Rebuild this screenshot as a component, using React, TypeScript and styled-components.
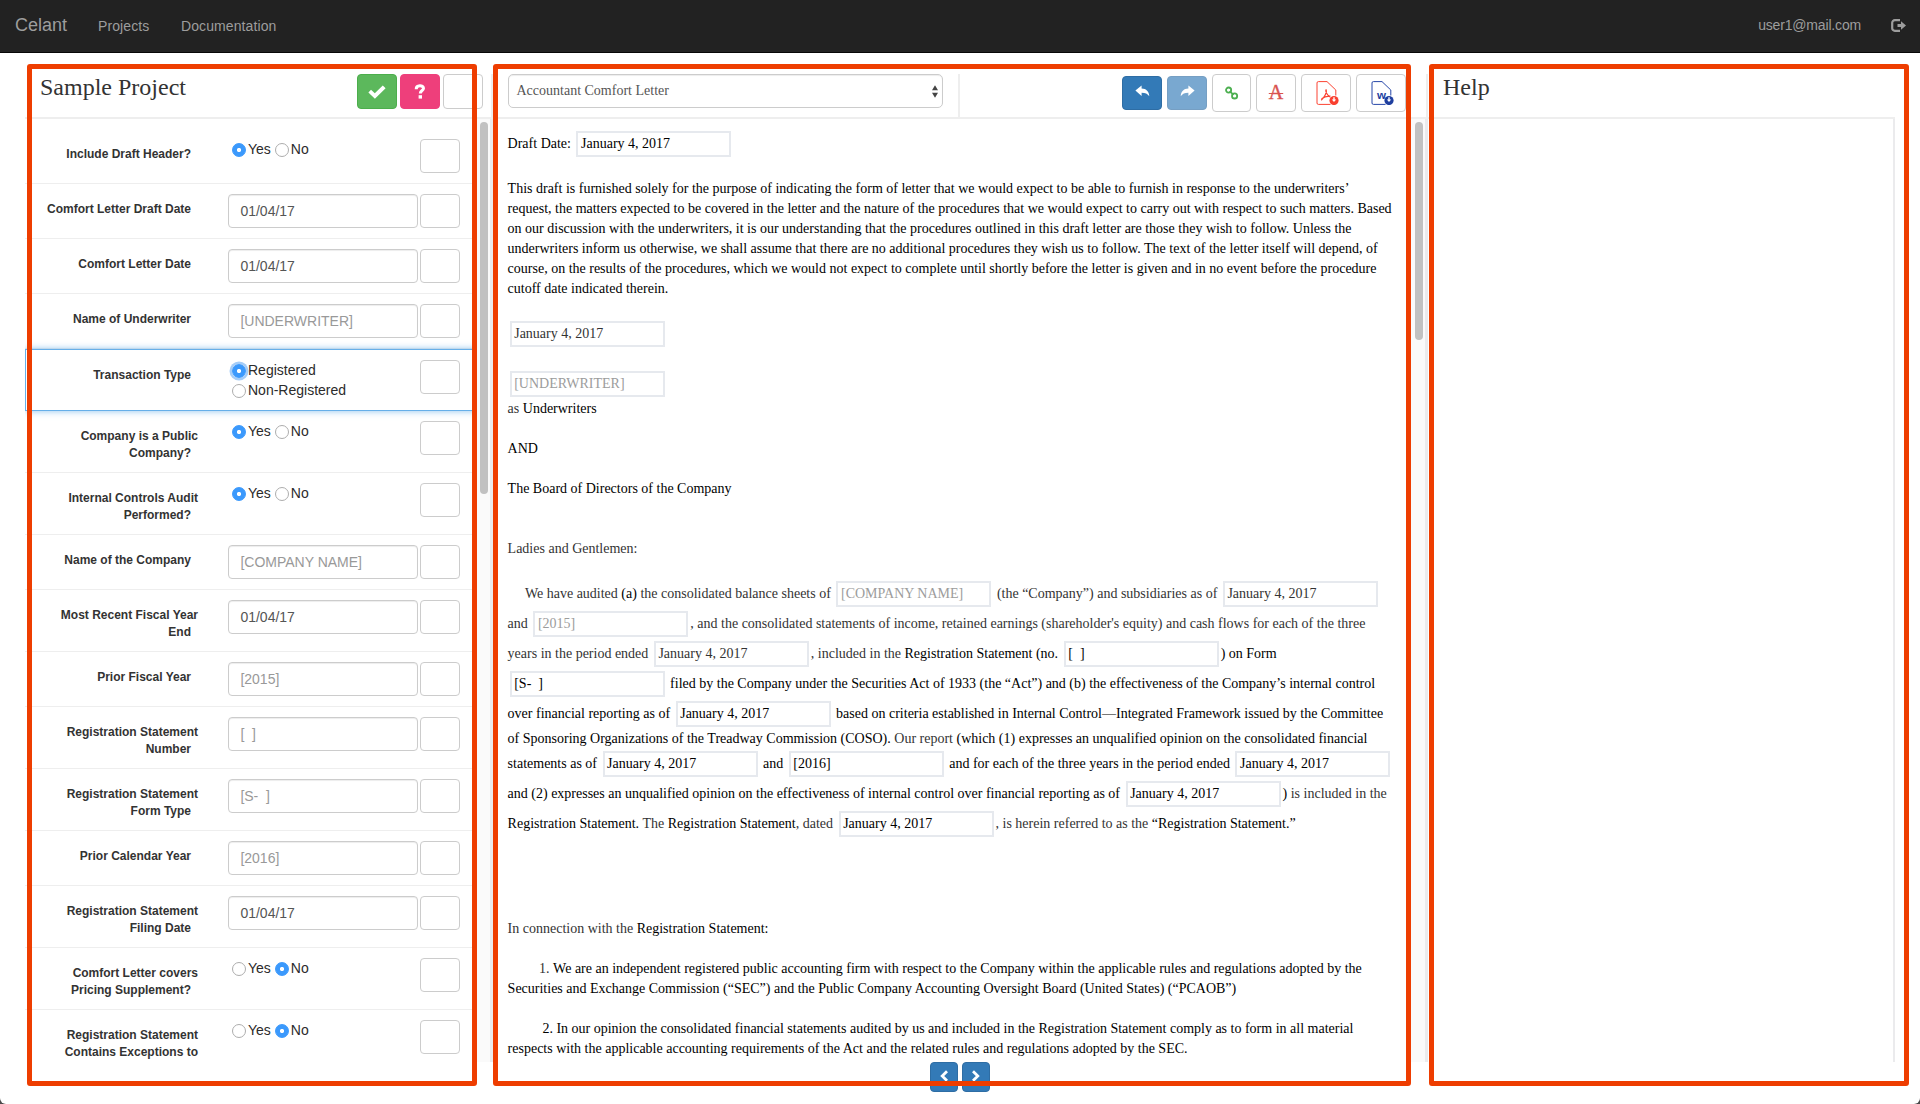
import React from "react";
import styled, { createGlobalStyle, css } from "styled-components";

const serif = `"Liberation Serif", "Times New Roman", serif`;
const sans = `"Liberation Sans", Arial, sans-serif`;

const GlobalStyle = createGlobalStyle`
  *, *::before, *::after { box-sizing: border-box; }
  html, body { margin: 0; padding: 0; background: #4a4a4a; }
  body { overflow: hidden; font-family: ${sans}; font-size: 14px; line-height: 20px; }
`;

const Page = styled.div`
  height: 1104px;
  display: flex;
  flex-direction: column;
  background: #fff;
  border-radius: 0 0 6px 6px;
`;

const Navbar = styled.nav`
  height: 53px;
  flex: none;
  display: flex;
  align-items: center;
  padding: 0 14px 2px 15px;
  background: #222;
  border-bottom: 1px solid #080808;
  color: #9d9d9d;
`;

const Brand = styled.span`
  font-size: 18px;
  width: 83px;
`;

const NavLink = styled.span<{ $width?: number }>`
  width: ${(p) => (p.$width ? `${p.$width}px` : "auto")};
  padding-top: 2px;
  letter-spacing: 0.1px;
`;

const User = styled.span`
  margin-left: auto;
  margin-right: 30px;
  letter-spacing: -0.17px;
`;

const Panels = styled.main`
  height: 1009px;
  margin: 21px 25px 0 25px;
  display: grid;
  grid-template-columns: 468px 935px 467px;
  padding-bottom: 21px;
`;

const Panel = styled.section`
  position: relative;
  height: 988px;
  display: flex;
  flex-direction: column;
  min-width: 0;
`;

/* Highlight frame drawn over each panel. */
const Frame = styled.div<{ $left: number; $width: number }>`
  position: absolute;
  z-index: 5;
  top: -10px;
  left: ${(p) => p.$left}px;
  width: ${(p) => p.$width}px;
  height: 1022px;
  border: 5px solid #ee3d00;
  border-radius: 3px;
  pointer-events: none;
`;

const PanelHeader = styled.header<{ $divided?: boolean }>`
  height: 45px;
  flex: none;
  display: flex;
  align-items: flex-start;
  border-bottom: 2px solid #eee;
  ${(p) =>
    p.$divided &&
    css`
      box-shadow: inset -2px 0 0 #eee;
    `}
`;

const Title = styled.h3`
  margin: 0;
  font: 400 24px/26px ${serif};
  color: #333;
  padding-left: 15px;
`;

const PanelBody = styled.div<{ $edge: number }>`
  flex: 1;
  min-height: 0;
  display: flex;
  overflow: hidden;
  border-right: ${(p) => p.$edge}px solid #ebebed;
`;

const Track = styled.div`
  width: 15px;
  flex: none;
  background: #fafafa;
  padding: 3px 0 0 5px;
`;

const Thumb = styled.div<{ $height: number }>`
  width: 8px;
  height: ${(p) => p.$height}px;
  border-radius: 4px;
  background: #c1c1c1;
`;

const HeaderButtons = styled.div`
  display: flex;
  gap: 3px;
  margin-left: auto;
  margin-right: 10px;
`;

type Tone = "green" | "pink" | "blank";
const tones: Record<Tone, [string, string]> = {
  green: ["#5cb85c", "#4cae4c"],
  pink: ["#ee3f7b", "#ee3f7b"],
  blank: ["transparent", "#ccc"],
};

const HeaderButton = styled.button<{ $tone: Tone }>`
  width: 40px;
  height: 35px;
  padding: 0;
  display: flex;
  align-items: center;
  justify-content: center;
  color: #fff;
  background: ${(p) => tones[p.$tone][0]};
  border: 1px solid ${(p) => tones[p.$tone][1]};
  border-radius: 4px;
`;

const Questions = styled.div`
  flex: 1;
  padding-top: 10px;
`;

const Row = styled.div<{ $active?: boolean }>`
  display: grid;
  grid-template-columns: 173px 30px 190px 2px 40px;
  align-items: start;
  padding: 10px 0;
  border-bottom: 1px solid #eee;
  ${(p) =>
    p.$active &&
    css`
      border: 1px solid #66afe9;
      margin-right: -4px;
      grid-template-columns: 172px 30px 190px 2px 40px;
      box-shadow: 0 0 7px rgba(102, 175, 233, 0.75);
    `}
`;

const Label = styled.label`
  grid-column: 1;
  padding-top: 7px;
  font: 700 12px/17px ${sans};
  letter-spacing: 0;
  text-align: right;
  white-space: pre;
  color: #333;
`;

/* Slot after the label where a required marker would sit. */
const MarkerSlot = styled.span`
  display: inline-block;
  width: 7px;
`;

const Field = styled.input`
  grid-column: 3;
  width: 190px;
  height: 34px;
  padding: 0 11.4px;
  font: 14px/20px ${sans};
  color: #555;
  background: #fff;
  border: 1px solid #ccc;
  border-radius: 4px;
  box-shadow: inset 0 1px 1px rgba(0, 0, 0, 0.075);
  &::placeholder {
    color: #999;
    opacity: 1;
  }
`;

const NoteBox = styled.div`
  grid-column: 5;
  height: 34px;
  border: 1px solid #ccc;
  border-radius: 4px;
`;

const Choices = styled.div`
  grid-column: 3;
  padding-left: 4px;
  display: flex;
  flex-wrap: wrap;
  column-gap: 4px;
`;

const Choice = styled.span`
  display: flex;
  align-items: center;
  gap: 2px;
  height: 20px;
  color: #2b2b2b;
`;

const Radio = styled.span<{ $on?: boolean; $focus?: boolean }>`
  width: 14px;
  height: 14px;
  margin-top: 2px;
  border-radius: 50%;
  border: 1px solid #adadad;
  background: #fff;
  ${(p) =>
    p.$on &&
    css`
      border-color: #3b99fc;
      background: radial-gradient(circle, #fff 0 1.8px, #3b99fc 2.4px);
    `}
  ${(p) =>
    p.$focus &&
    css`
      box-shadow: 0 0 0 2.5px #a5cdf8;
    `}
`;

const SelectSlot = styled.div`
  width: 467px;
  height: 43px;
  padding-left: 15px;
  border-right: 2px solid #eee;
`;

const Select = styled.div`
  width: 435px;
  height: 34px;
  display: flex;
  align-items: center;
  justify-content: space-between;
  padding: 0 4px 0 7.5px;
  font: 14px/20px ${serif};
  color: #555;
  border: 1px solid #ccc;
  border-radius: 5px;
  box-shadow: inset 0 1px 1px rgba(0, 0, 0, 0.075);
`;

const Tools = styled.div`
  display: flex;
  gap: 5px;
  margin-left: auto;
  margin-right: 22px;
`;

const ToolButton = styled.button<{ $width: number; $primary?: boolean; $faded?: boolean }>`
  width: ${(p) => p.$width}px;
  height: 38px;
  padding: 0;
  display: flex;
  align-items: center;
  justify-content: center;
  background: #fff;
  border: 1px solid #ccc;
  border-radius: 4px;
  ${(p) =>
    p.$primary &&
    css`
      height: 34px;
      margin-top: 2px;
      padding-bottom: 4px;
      background: #337ab7;
      border-color: #2e6da4;
    `}
  opacity: ${(p) => (p.$faded ? 0.65 : 1)};
`;

const StruckLetter = styled.span`
  font: 400 20px/20px ${serif};
  -webkit-text-stroke: 0.4px #d9534f;
  padding-bottom: 3px;
  color: #d9534f;
  text-decoration: line-through;
  text-decoration-thickness: 1px;
`;

const Document = styled.article`
  flex: 1;
  padding: 10px 0 0 14.6px;
  font: 14px/20px ${serif};
  color: #000;
`;

const Line = styled.div<{ $indent?: number; $before?: number; $dim?: boolean }>`
  display: flex;
  align-items: center;
  min-height: 20px;
  white-space: pre;
  padding-left: ${(p) => p.$indent ?? 0}px;
  margin-top: ${(p) => p.$before ?? 0}px;
  color: ${(p) => (p.$dim ? "#333" : "#000")};
`;

const Dark = styled.span`
  color: #000;
`;

const Dim = styled.span`
  color: #333;
`;

const Blank = styled.span<{ $empty?: boolean }>`
  width: 155px;
  height: 26px;
  margin: 2px;
  padding-left: 2.6px;
  line-height: 21px;
  border: 2px solid #e6e9ee;
  color: ${(p) => (p.$empty ? "#9c9c9c" : "inherit")};
`;

const Pager = styled.div`
  height: 30px;
  flex: none;
  display: flex;
  gap: 4px;
  padding-left: 437px;
  margin-bottom: -30px;
`;

const PageButton = styled.button`
  width: 28px;
  height: 30px;
  padding: 0 0 3px;
  display: flex;
  align-items: center;
  justify-content: center;
  background: #337ab7;
  border: 1px solid #2e6da4;
  border-radius: 4px;
`;

const LogoutIcon = () => (
  <svg width="15" height="13" viewBox="0 0 15 13">
    <path d="M9 1.2H3.8A2.6 2.6 0 0 0 1.2 3.800V9.200A2.600 2.600 0 0 0 3.800 11.800H9" fill="none" stroke="#9d9d9d" strokeWidth="2.200" />
    <path d="M6.500 5H10V2.300L15 6.500L10 10.700V8H6.500Z" fill="#9d9d9d" />
  </svg>
);

const CheckIcon = () => (
  <svg width="18" height="14" viewBox="0 0 18 14">
    <path d="M0.400 7.400L3 4.800L6.800 8.300L14.800 0.500L17.600 3.200L6.900 13.800Z" fill="#fff" />
  </svg>
);

const QuestionIcon = () => (
  <svg width="12" height="15" viewBox="0 0 12 15">
    <path d="M2.200 5.200C2.200 0.600 9.500 0.900 9.500 4.300C9.500 6.700 6.300 6.400 6.300 9.600" fill="none" stroke="#fff" strokeWidth="3" />
    <rect x="4.600" y="11.200" width="3.400" height="3.400" fill="#fff" />
  </svg>
);

const ArrowIcon = ({ flip }: { flip?: boolean }) => (
  <svg width="15" height="12" viewBox="0 0 15 12" transform={flip ? "scale(-1 1)" : undefined}>
    <path d="M0.400 5.600L6.600 0.400V3.600C11.400 3.800 14 6.500 14.300 11.300C12.500 8.700 10.400 7.700 6.600 7.700V10.900Z" fill="#fff" />
  </svg>
);

const LinkIcon = () => (
  <svg width="14" height="14" viewBox="0 0 14 14" fill="none" stroke="#4caf50" strokeWidth="1.800">
    <circle cx="3.600" cy="4.100" r="2.600" />
    <circle cx="9.600" cy="9.900" r="2.600" />
    <path d="M4.700 5.200L8.500 8.800" />
  </svg>
);

const FileIcon = styled.svg`
  width: 23px;
  height: 24px;
  margin-left: 2px;
`;

const FileOutline = () => (
  <path d="M14.500 23.400H2.400Q1 23.400 1 22V2Q1 0.600 2.400 0.600H11L19.800 9V14.500" fill="none" strokeWidth="1" />
);

const DownloadBadge = ({ color }: { color: string }) => (
  <>
    <circle cx="18" cy="19.500" r="4.600" fill={color} stroke="none" />
    <path d="M17.300 16.200H18.700V18.600H20.200L18 20.900L15.800 18.600H17.300Z" fill="#fff" stroke="none" />
  </>
);

const PdfIcon = () => (
  <FileIcon viewBox="0 0 23 24" stroke="#fb4332">
    <FileOutline />
    <path
      d="M10 8.500C9 10 11.300 14.500 14 16M10.200 8.500C11.300 11 8.400 16.500 5.200 19.200M5.500 17.800C8 15.800 11.500 15 14.500 15.200"
      fill="none"
      strokeWidth="1.200"
    />
    <DownloadBadge color="#f93f2f" />
  </FileIcon>
);

const WordIcon = () => (
  <FileIcon viewBox="0 0 23 24" stroke="#2747a8">
    <FileOutline />
    <text x="6" y="18" fontFamily="Liberation Sans, sans-serif" fontSize="11.500" fontWeight="700" textLength="9" lengthAdjust="spacingAndGlyphs" fill="#1f3f9f" stroke="none">
      w
    </text>
    <DownloadBadge color="#1f3f9f" />
  </FileIcon>
);

const SortIcon = () => (
  <svg width="6" height="13" viewBox="0 0 6 13">
    <path d="M0 5.300L3 0.300L6 5.300ZM0 7.700H6L3 12.700Z" fill="#444" />
  </svg>
);

const Chevron = ({ right }: { right?: boolean }) => (
  <svg width="10" height="12" viewBox="0 0 10 12">
    <path d={right ? "M2 1.200L6.800 6L2 10.800" : "M8 1.200L3.200 6L8 10.800"} fill="none" stroke="#fff" strokeWidth="2.800" />
  </svg>
);

type Question = {
  label: string;
  kind: "text" | "radio";
  value?: string;
  placeholder?: string;
  options?: string[];
  selected?: number;
  active?: boolean;
  continues?: boolean;
};

const yesNo = ["Yes", "No"];

const questions: Question[] = [
  { label: "Include Draft Header?", kind: "radio", options: yesNo, selected: 0 },
  { label: "Comfort Letter Draft Date", kind: "text", value: "01/04/17" },
  { label: "Comfort Letter Date", kind: "text", value: "01/04/17" },
  { label: "Name of Underwriter", kind: "text", placeholder: "[UNDERWRITER]" },
  { label: "Transaction Type", kind: "radio", options: ["Registered", "Non-Registered"], selected: 0, active: true },
  { label: "Company is a Public\nCompany?", kind: "radio", options: yesNo, selected: 0 },
  { label: "Internal Controls Audit\nPerformed?", kind: "radio", options: yesNo, selected: 0 },
  { label: "Name of the Company", kind: "text", placeholder: "[COMPANY NAME]" },
  { label: "Most Recent Fiscal Year\nEnd", kind: "text", value: "01/04/17" },
  { label: "Prior Fiscal Year", kind: "text", placeholder: "[2015]" },
  { label: "Registration Statement\nNumber", kind: "text", placeholder: "[  ]" },
  { label: "Registration Statement\nForm Type", kind: "text", placeholder: "[S-  ]" },
  { label: "Prior Calendar Year", kind: "text", placeholder: "[2016]" },
  { label: "Registration Statement\nFiling Date", kind: "text", value: "01/04/17" },
  { label: "Comfort Letter covers\nPricing Supplement?", kind: "radio", options: yesNo, selected: 1 },
  { label: "Registration Statement\nContains Exceptions to", kind: "radio", options: yesNo, selected: 1, continues: true },
];

const QuestionRow = ({ q }: { q: Question }) => (
  <Row $active={q.active}>
    <Label>
      {q.label}
      {!q.continues && <MarkerSlot />}
    </Label>
    {q.kind === "text" ? (
      <Field defaultValue={q.value} placeholder={q.placeholder} />
    ) : (
      <Choices>
        {q.options!.map((option, i) => (
          <Choice key={option}>
            <Radio $on={i === q.selected} $focus={q.active && i === q.selected} />
            {option}
          </Choice>
        ))}
      </Choices>
    )}
    <NoteBox />
  </Row>
);

const DateBlank = () => <Blank>January 4, 2017</Blank>;

const Letter = () => (
  <Document>
    <Line>Draft Date: <DateBlank /></Line>
    <Line $before={20}>This draft is furnished solely for the purpose of indicating the form of letter that we would expect to be able to furnish in response to the underwriters’</Line>
    <Line>request, the matters expected to be covered in the letter and the nature of the procedures that we would expect to carry out with respect to such matters. Based</Line>
    <Line>on our discussion with the underwriters, it is our understanding that the procedures outlined in this draft letter are those they wish to follow. Unless the</Line>
    <Line>underwriters inform us otherwise, we shall assume that there are no additional procedures they wish us to follow. The text of the letter itself will depend, of</Line>
    <Line>course, on the results of the procedures, which we would not expect to complete until shortly before the letter is given and in no event before the procedure</Line>
    <Line>cutoff date indicated therein.</Line>
    <Line $before={20} $dim><DateBlank /></Line>
    <Line $before={20}><Blank $empty>[UNDERWRITER]</Blank></Line>
    <Line><Dim>as </Dim>Underwriters</Line>
    <Line $before={20}>AND</Line>
    <Line $before={20}>The Board of Directors of the Company</Line>
    <Line $before={40} $dim>Ladies and Gentlemen:</Line>
    <Line $before={20} $indent={17.3} $dim>We have audited <Dark>(a)</Dark> the consolidated balance sheets of <Blank $empty>[COMPANY NAME]</Blank> (the “Company”) and subsidiaries as of <DateBlank /></Line>
    <Line $dim>and <Blank $empty>[2015]</Blank>, and the consolidated statements of income, retained earnings (shareholder's equity) and cash flows for each of the three</Line>
    <Line $dim>years in the period ended <DateBlank />, included in the <Dark>Registration Statement (no. </Dark><Blank><Dark>[  ]</Dark></Blank><Dark>) on Form</Dark></Line>
    <Line><Blank>[S-  ]</Blank> filed by the Company under the Securities Act of 1933 (the “Act”) and (b) the effectiveness of the Company’s internal control</Line>
    <Line>over financial reporting as of <DateBlank /> based on criteria established in Internal Control—Integrated Framework issued by the Committee</Line>
    <Line>of Sponsoring Organizations of the Treadway Commission (COSO). <Dim>Our report </Dim>(which (1) expresses an unqualified opinion on the consolidated financial</Line>
    <Line>statements as of <DateBlank /> and <Blank>[2016]</Blank> and for each of the three years in the period ended <DateBlank /></Line>
    <Line>and (2) expresses an unqualified opinion on the effectiveness of internal control over financial reporting as of <DateBlank />) <Dim>is included in the</Dim></Line>
    <Line>Registration Statement. <Dim>The </Dim>Registration Statement<Dim>, dated </Dim><DateBlank /><Dim>, is herein referred to as the </Dim>“Registration Statement.”</Line>
    <Line $before={80}><Dim>In connection with the </Dim>Registration Statement:</Line>
    <Line $before={20} $indent={31.5}><Dim>1. </Dim>We are an independent registered public accounting firm with respect to the Company within the applicable rules and regulations adopted by the</Line>
    <Line>Securities and Exchange Commission (“SEC”) and the Public Company Accounting Oversight Board (United States) (“PCAOB”)</Line>
    <Line $before={20} $indent={34.8}>2. In our opinion the consolidated financial statements audited by us and included in the Registration Statement comply as to form in all material</Line>
    <Line>respects with the applicable accounting requirements of the Act and the related rules and regulations adopted by the SEC.</Line>
  </Document>
);

export default function App() {
  return (
    <>
      <GlobalStyle />
      <Page>
        <Navbar>
          <Brand>Celant</Brand>
          <NavLink $width={83}>Projects</NavLink>
          <NavLink>Documentation</NavLink>
          <User>user1@mail.com</User>
          <LogoutIcon />
        </Navbar>
        <Panels>
          <Panel>
            <PanelHeader $divided>
              <Title>Sample Project</Title>
              <HeaderButtons>
                <HeaderButton $tone="green"><CheckIcon /></HeaderButton>
                <HeaderButton $tone="pink"><QuestionIcon /></HeaderButton>
                <HeaderButton $tone="blank" />
              </HeaderButtons>
            </PanelHeader>
            <PanelBody $edge={3}>
              <Questions>
                {questions.map((q) => (
                  <QuestionRow key={q.label} q={q} />
                ))}
              </Questions>
              <Track><Thumb $height={372} /></Track>
            </PanelBody>
            <Frame $left={2} $width={450} />
          </Panel>
          <Panel>
            <PanelHeader $divided>
              <SelectSlot>
                <Select>Accountant Comfort Letter<SortIcon /></Select>
              </SelectSlot>
              <Tools>
                <ToolButton $width={40} $primary><ArrowIcon /></ToolButton>
                <ToolButton $width={40} $primary $faded><ArrowIcon flip /></ToolButton>
                <ToolButton $width={39}><LinkIcon /></ToolButton>
                <ToolButton $width={40}><StruckLetter>A</StruckLetter></ToolButton>
                <ToolButton $width={50}><PdfIcon /></ToolButton>
                <ToolButton $width={50}><WordIcon /></ToolButton>
              </Tools>
            </PanelHeader>
            <PanelBody $edge={3}>
              <Letter />
              <Track><Thumb $height={218} /></Track>
            </PanelBody>
            <Pager>
              <PageButton><Chevron /></PageButton>
              <PageButton><Chevron right /></PageButton>
            </Pager>
            <Frame $left={0} $width={918} />
          </Panel>
          <Panel>
            <PanelHeader>
              <Title>Help</Title>
            </PanelHeader>
            <PanelBody $edge={2} />
            <Frame $left={1} $width={480} />
          </Panel>
        </Panels>
      </Page>
    </>
  );
}
